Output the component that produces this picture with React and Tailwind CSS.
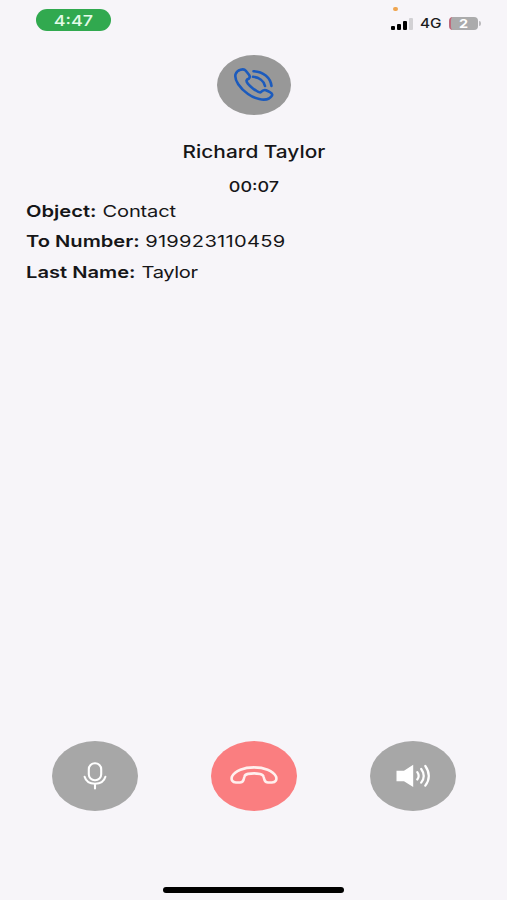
function StatusBar() {
  return (
    <header className="flex h-10 items-start justify-between pl-9 pr-[26px]">
      <div className="mt-[9px] flex h-[22px] w-[75px] items-center justify-center rounded-full bg-[#31a94f] text-[#e4fbe8]">
        <span className="block scale-x-[1.2] text-[15px] leading-none font-medium">4:47</span>
      </div>
      <div className="flex flex-col">
        <span className="mt-[7px] ml-[2px] h-1 w-[5px] rounded-full bg-[#efa550]" />
        <div className="mt-[5px] flex h-[15px] items-center">
          <div className="flex h-3 w-[23px] items-end gap-[2px]">
            <span className="h-1 w-1 rounded-[1px] bg-black" />
            <span className="h-[6px] w-1 rounded-[1px] bg-black" />
            <span className="h-[9px] w-1 rounded-[1px] bg-black" />
            <span className="h-3 w-1 rounded-[1px] bg-[#d2d1d4]" />
          </div>
          <span className="ml-[6px] block w-[28px] origin-left scale-x-[1.18] text-[13px] leading-none font-medium text-[#1c1c1e]">4G</span>
          <div className="ml-px flex h-[13px] w-[29px] items-center justify-center overflow-hidden rounded-[4px] border-l-2 border-[#bf6a7c] bg-[#ababac]">
            <span className="block scale-x-[1.2] pr-[2px] text-[12px] leading-none font-bold text-white">2</span>
          </div>
          <span className="ml-px h-[5px] w-[2px] rounded-r-full bg-[#bcbbbe]" />
        </div>
      </div>
    </header>
  );
}

function Detail({ label, value, valueClass }) {
  return (
    <div className="flex h-[30.4px] origin-left scale-x-[1.22] items-center text-[16.5px] whitespace-nowrap text-[#161618]">
      <span className="font-semibold">{label}</span>
      <span className={valueClass}>{value}</span>
    </div>
  );
}

export default function App() {
  return (
    <div className="flex h-[900px] w-[507px] flex-col overflow-hidden bg-[#f7f5f9] font-['Inter','Liberation_Sans',sans-serif]">
      <StatusBar />

      <section className="flex flex-col items-center pt-[15px] pl-px">
        <div className="flex h-[60px] w-[74px] items-center justify-center rounded-[50%] bg-[#989898]">
          <svg className="h-[34px] w-[42px]" viewBox="0 0 42 34" fill="none" stroke="#1c5bbd" strokeWidth="2.6" strokeLinecap="round" strokeLinejoin="round">
            <path d="M7.5 1.8 Q3.8 2.8 2.5 6.4 C1.2 12 7 20.5 15 26 C22 31 31 33 36 30.5 Q40 28 39 26 Q38.5 24.7 33 22.3 Q30.5 21.3 27.8 24.2 C25.5 25.5 13 16 13.5 12.5 Q13.7 11.5 16 10.5 Q17.5 9 16 6.8 L12.8 2.7 Q11 .5 7.5 1.8Z" />
            <path d="M20 8.8 C26 9.4 31 12.8 32 18 M20.5 3.2 C30 3.5 37.5 9.5 38.5 18" />
          </svg>
        </div>
        <h1 className="mt-[25px] flex h-6 items-center text-[17.5px] font-medium whitespace-nowrap text-[#161618]">
          <span className="block scale-x-[1.19]">Richard Taylor</span>
        </h1>
        <p className="mt-[13px] flex h-5 items-center text-[15px] font-medium text-[#161618]">
          <span className="block scale-x-[1.2]">00:07</span>
        </p>
      </section>

      <section className="-mt-px pl-[25.5px]">
        <Detail label="Object:" value="Contact" valueClass="ml-[5px] -tracking-[0.01em]" />
        <Detail label="To Number:" value="919923110459" valueClass="ml-[4.5px] tracking-[0.013em]" />
        <Detail label="Last Name:" value="Taylor" valueClass="ml-[5px] -tracking-[0.02em]" />
      </section>

      <nav className="mt-auto flex justify-between pr-[51.5px] pl-[52px]">
        <button className="flex h-[70px] w-[86px] items-center justify-center rounded-[50%] bg-[#a7a7a7]">
          <svg className="h-[28px] w-[24px]" viewBox="0 0 24 28" fill="none" stroke="white" strokeWidth="2.1" strokeLinecap="round">
            <rect x="5.8" y="1.3" width="12.4" height="17" rx="6" />
            <path d="M1.6 14.8 C3 19.6 7 21.8 12 21.8 S21 19.6 22.4 14.8 M12 21.8 V26.4" />
          </svg>
        </button>
        <button className="flex h-[70px] w-[86px] items-center justify-center rounded-[50%] bg-[#fa7e80]">
          <svg className="mb-[2px] h-[18px] w-[48px]" viewBox="0 0 48 18" fill="none" stroke="#fff0ee" strokeWidth="2.6" strokeLinejoin="round">
            <path d="M2 10.5 C5 4.5 14 1.4 24 1.4 S43 4.5 46 10.5 C47.2 14 45.5 16.5 42 16.5 H38 Q35.5 16.5 34.5 14 L33.5 10.5 Q33 8.5 30 7.9 Q24 6.8 18 7.9 Q15 8.5 14.5 10.5 L13.5 14 Q12.5 16.5 10 16.5 H6 C2.5 16.5 .8 14 2 10.5Z" />
          </svg>
        </button>
        <button className="flex h-[70px] w-[86px] items-center justify-center rounded-[50%] bg-[#a7a7a7]">
          <svg className="h-[24px] w-[34px]" viewBox="0 0 34 24" fill="none" stroke="white" strokeWidth="2.2" strokeLinecap="round">
            <path d="M.5 6.7 H8 L17.2 .7 V23 L8 17.3 H.5Z" fill="white" stroke="none" />
            <path d="M21.3 8.2 Q24 12 21.3 15.5 M25.2 5 Q30.3 12 25.2 18.7 M29.3 2 Q36.3 12 29.3 21.7" />
          </svg>
        </button>
      </nav>

      <footer className="mt-[76.5px] mb-[7.5px] flex justify-center">
        <span className="h-[5.5px] w-[181px] rounded-full bg-black" />
      </footer>
    </div>
  );
}
